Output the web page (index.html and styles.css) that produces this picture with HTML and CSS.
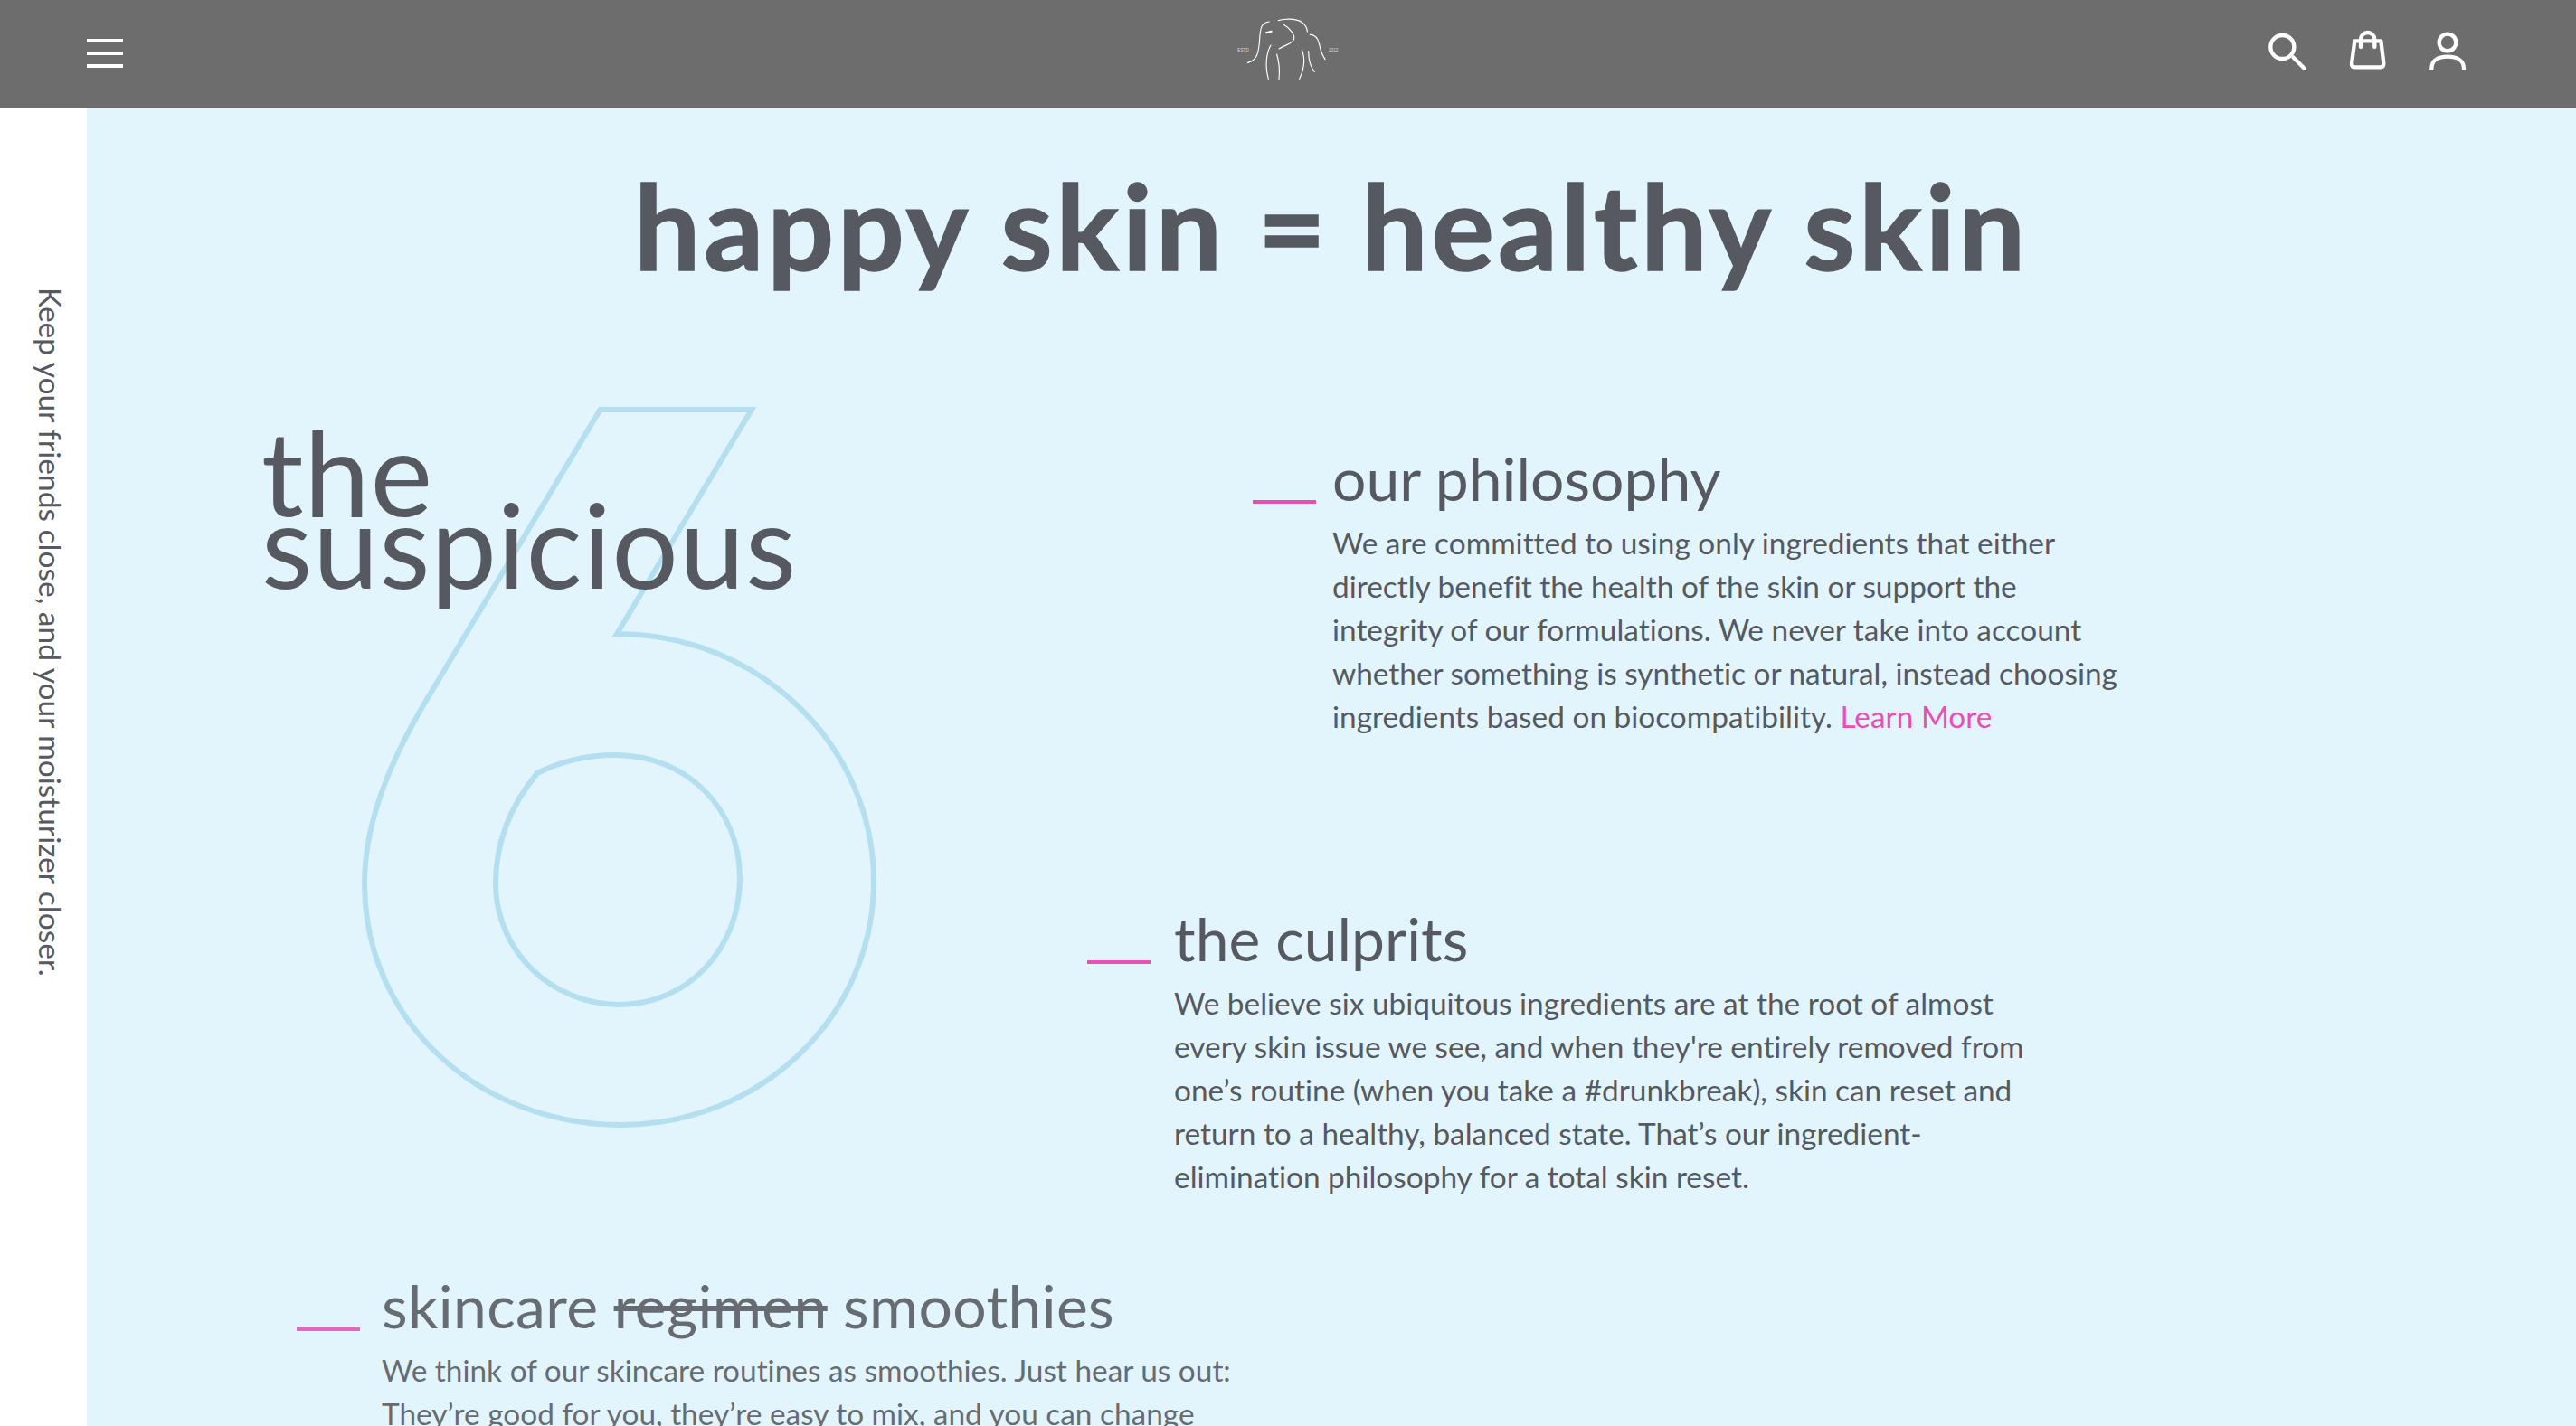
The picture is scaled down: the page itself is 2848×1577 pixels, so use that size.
FILE: index.html
```html
<!DOCTYPE html>
<html lang="en">
<head>
    <meta charset="UTF-8">
    <title>Our Philosophy</title>
    <link rel="stylesheet" href="styles.css">
</head>
<body>
    <header class="topbar">
        <button class="burger"><span></span><span></span><span></span></button>
        <svg class="logo" viewBox="0 0 510 354" width="170" height="118" fill="none" stroke="#fff" stroke-width="3.5" stroke-linecap="round">
            <path d="M118 208C150 200 155 175 158 130C160 90 165 75 190 72"/>
            <path d="M220 68C250 60 290 62 305 80C315 92 316 100 316 105"/>
            <path d="M180 109L197 104" stroke-width="6"/>
            <path d="M238 82C260 95 275 115 272 130C268 145 240 150 222 162"/>
            <path d="M195 150C180 175 175 220 187 262"/>
            <path d="M215 180C222 205 225 235 222 262"/>
            <path d="M325 115C350 115 355 140 360 165C365 180 370 190 375 197"/>
            <path d="M298 165C312 200 305 230 290 262"/>
            <path d="M320 170C320 200 325 220 340 238"/>
            <text class="logo-year" x="85" y="170">ESTD</text>
            <text class="logo-year" x="387" y="170">2012</text>
        </svg>
        <div class="tools">
            <svg viewBox="0 0 150 150" width="50" height="50" fill="none" stroke="#fff" stroke-width="13" stroke-linecap="round">
                <circle cx="55" cy="75" r="39"/>
                <path d="M92 110L128 146"/>
            </svg>
            <svg viewBox="0 0 150 150" width="50" height="50" fill="none" stroke="#fff" stroke-width="13" stroke-linecap="round" stroke-linejoin="round">
                <path d="M31 55H118L127 130Q127 142 117 142H31Q21 142 21 130Z"/>
                <path d="M51 75V50A23 23 0 0 1 97 50V75"/>
            </svg>
            <svg viewBox="0 0 150 150" width="50" height="50" fill="none" stroke="#fff" stroke-width="13" stroke-linecap="round">
                <circle cx="75" cy="60" r="28"/>
                <path d="M22 147C22 120 42 107 75 107C107 107 129 120 129 147"/>
            </svg>
        </div>
    </header>

    <div class="page">
        <aside class="side">
            <p class="side-text">Keep your friends close, and your moisturizer closer.</p>
        </aside>
        <main class="content">
            <h1 class="headline">happy skin = healthy skin</h1>

            <div class="intro">
                <div class="intro-left">
                    <svg class="six" viewBox="400 450 570 800" width="570" height="800" fill="none" stroke="#b3dff0" stroke-width="6">
                        <path d="M663.5 453H831L682 701C840 701 966 825 966 975C966 1125 840 1244 687 1244C530 1244 403 1130 403 977C403 900 440 825 480 760Z"/>
                        <path d="M594 855C620 842 650 835 680 835C760 835 818 895 818 971C818 1050 760 1111 685 1111C608 1111 548 1050 548 977C548 930 565 890 594 855Z"/>
                    </svg>
                    <h2 class="suspicious">the<br>suspicious</h2>
                </div>
                <div class="intro-right">
                    <section class="note note-philosophy">
                        <span class="dash"></span>
                        <h3>our philosophy</h3>
                        <p>We are committed to using only ingredients that either<br>directly benefit the health of the skin or support the<br>integrity of our formulations. We never take into account<br>whether something is synthetic or natural, instead choosing<br>ingredients based on biocompatibility. <a href="#">Learn More</a></p>
                    </section>
                    <section class="note note-culprits">
                        <span class="dash"></span>
                        <h3>the culprits</h3>
                        <p>We believe six ubiquitous ingredients are at the root of almost<br>every skin issue we see, and when they're entirely removed from<br>one’s routine (when you take a #drunkbreak), skin can reset and<br>return to a healthy, balanced state. That’s our ingredient-<br>elimination philosophy for a total skin reset.</p>
                    </section>
                </div>
            </div>

            <section class="note note-smoothies">
                <span class="dash"></span>
                <h3>skincare <s>regimen</s> smoothies</h3>
                <p>We think of our skincare routines as smoothies. Just hear us out:<br>They’re good for you, they’re easy to mix, and you can change</p>
            </section>
        </main>
    </div>
</body>
</html>
```

FILE: styles.css
```css
* {
    box-sizing: border-box;
}
html, body {
    height: 100%;
}
body {
    margin: 0;
    height: 1577px;
    overflow: hidden;
    background: white;
    color: #565960;
    font-family: Lato, sans-serif;
    font-variant-ligatures: none;
}

.topbar {
    height: 119px;
    background: #6d6d6d;
    display: flex;
    align-items: center;
    justify-content: space-between;
    padding: 0 117px 0 96px;
    position: relative;
}
.burger {
    width: 40px;
    display: flex;
    flex-direction: column;
    gap: 10px;
    padding: 0;
    margin: -1px 0 0;
    border: none;
    background: none;
}
.burger span {
    height: 4px;
    background: white;
}
.logo {
    position: absolute;
    left: 1340px;
    top: 0;
}
.logo-year {
    font-family: "Liberation Sans", sans-serif;
    font-size: 14px;
    fill: #ddd;
    stroke: none;
}
.tools {
    display: flex;
    gap: 38px;
    margin-bottom: 15px;
}

.page {
    display: flex;
    height: 1458px;
}
.side {
    width: 96px;
    flex: none;
    padding: 199px 0 0 38px;
}
.side-text {
    margin: 0;
    writing-mode: vertical-rl;
    font-size: 33.5px;
    line-height: 36px;
    white-space: nowrap;
}
.content {
    flex: 1;
    background: #e3f5fc;
    overflow: hidden;
}

.headline {
    margin: 53px 0 3px;
    text-align: center;
    font-size: 130px;
    line-height: 154px;
    letter-spacing: 3.9px;
    font-weight: 700;
    -webkit-text-stroke: 1.5px #565960;
}

.intro {
    display: flex;
}
.intro-left {
    width: 1100px;
    flex: none;
    height: 1080px;
    position: relative;
    padding: 0 0 0 193px;
}
.six {
    position: absolute;
    left: 304px;
    top: 121px;
}
.suspicious {
    position: relative;
    margin: 0;
    padding-top: 152px;
    font-size: 130px;
    line-height: 80px;
    letter-spacing: 0.7px;
    font-weight: 400;
}

.note {
    display: grid;
    grid-template-columns: 70px auto;
    align-items: baseline;
    justify-content: start;
}
.note h3 {
    margin: 0 0 11px;
    font-size: 66px;
    line-height: 72px;
    font-weight: 400;
}
.note p {
    grid-column: 2;
    margin: 0;
    font-size: 33.4px;
    line-height: 48px;
    white-space: nowrap;
}
.note a {
    color: #e84fb5;
    text-decoration: none;
}
.dash {
    height: 4px;
    background: #e84fb5;
    transform: translateY(3px);
}
.note-philosophy {
    margin: 164px 0 0 189px;
    column-gap: 18px;
}
.note-culprits {
    margin: 186px 0 0 6px;
    column-gap: 26px;
}
.note-smoothies {
    margin: -1px 0 0 232px;
    column-gap: 24px;
    opacity: 0.88;
}
.note-smoothies h3 {
    letter-spacing: 0.35px;
}
```
